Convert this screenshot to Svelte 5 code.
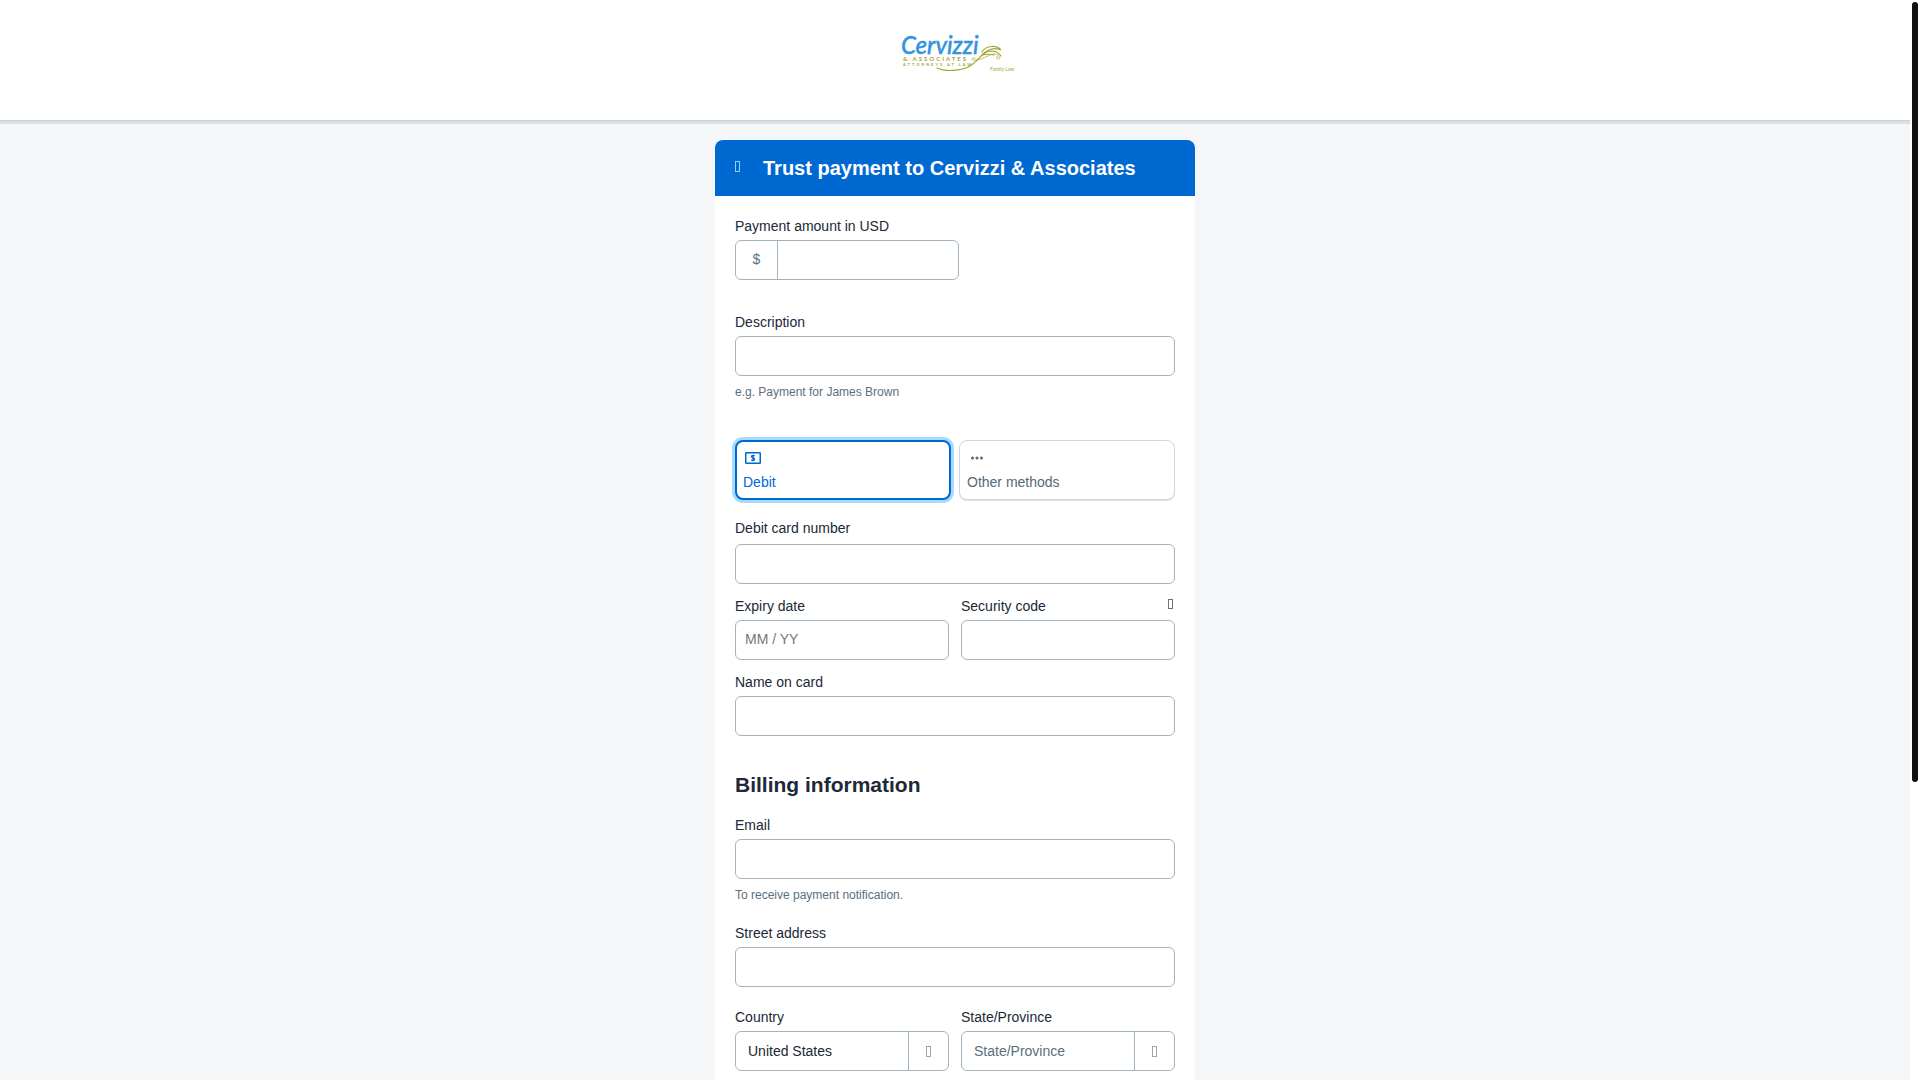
<script>
  let method = $state('debit');
  let amount = $state('');
  let country = $state('US');
  let region = $state('');
</script>

<div class="window">
  <div class="page">
    <header class="brand">
      <svg class="logo" viewBox="0 0 120 40" role="img" aria-label="Cervizzi &amp; Associates, Attorneys at Law, Family Law">
        <text class="wordmark" x="6" y="22">Cervizzi</text>
        <text class="firm" x="8" y="29">&amp; ASSOCIATES</text>
        <text class="trade" x="8" y="34">ATTORNEYS AT LAW</text>
        <text class="area" x="95" y="39">Family Law</text>
        <path class="swash" d="M42 36 C50 40 66 39 75 34 C84 29 86 20 96 19 C101 19 104 21 106 24" />
        <path class="swash" d="M87 20 C91 13 102 13 106 18 C99 15 93 17 87 23 C92 22 96 22 99 23" />
        <path class="swash thin" d="M80 26 C76 25 76 29 80 28 C88 28 92 23 99 22 C104 22 107 27 103 27 C101 27 101 25 103 24" />
      </svg>
    </header>

    <main>
      <form class="card">
        <div class="card-head">
          <span class="box light" aria-hidden="true"></span>
          <h1>Trust payment to Cervizzi &amp; Associates</h1>
        </div>

        <div class="card-body">
          <div class="field">
            <label for="amount">Payment amount in USD</label>
            <div class="money">
              <span class="currency">$</span>
              <input id="amount" type="text" inputmode="decimal" bind:value={amount} />
            </div>
          </div>

          <div class="field description">
            <label for="description">Description</label>
            <input id="description" class="control" type="text" />
            <p class="help">e.g. Payment for James Brown</p>
          </div>

          <div class="methods">
            <button type="button" class="method" class:selected={method === 'debit'} aria-pressed={method === 'debit'} onclick={() => (method = 'debit')}>
              <svg viewBox="0 0 16 16" aria-hidden="true">
                <rect x="0.75" y="2.75" width="14.5" height="10.5" rx="0.5" fill="none" stroke="currentColor" stroke-width="1.5" />
                <path d="M9.7 6.2 C9 5.1 6.5 5.2 6.5 6.7 C6.5 8.2 9.6 7.6 9.6 9.3 C9.6 10.9 7 11 6.3 9.7 M8 4.7 V11.3" fill="none" stroke="currentColor" stroke-width="1.3" />
              </svg>
              <span>Debit</span>
            </button>
            <button type="button" class="method" class:selected={method === 'other'} aria-pressed={method === 'other'} onclick={() => (method = 'other')}>
              <svg viewBox="0 0 16 16" aria-hidden="true">
                <circle cx="3.5" cy="8" r="1.5" fill="currentColor" />
                <circle cx="8" cy="8" r="1.5" fill="currentColor" />
                <circle cx="12.5" cy="8" r="1.5" fill="currentColor" />
              </svg>
              <span>Other methods</span>
            </button>
          </div>

          <div class="field card-number">
            <label for="card-number">Debit card number</label>
            <input id="card-number" class="control" type="text" inputmode="numeric" />
          </div>

          <div class="pair">
            <div class="field">
              <label for="expiry">Expiry date</label>
              <input id="expiry" class="control" type="text" placeholder="MM / YY" />
            </div>
            <div class="field">
              <div class="label-row">
                <label for="cvv">Security code</label>
                <button type="button" class="hint" aria-label="About the security code"><span class="box small"></span></button>
              </div>
              <input id="cvv" class="control" type="text" inputmode="numeric" />
            </div>
          </div>

          <div class="field holder">
            <label for="holder">Name on card</label>
            <input id="holder" class="control" type="text" />
          </div>

          <h2>Billing information</h2>

          <div class="field">
            <label for="email">Email</label>
            <input id="email" class="control" type="email" />
            <p class="help">To receive payment notification.</p>
          </div>

          <div class="field street">
            <label for="street">Street address</label>
            <input id="street" class="control" type="text" />
          </div>

          <div class="pair region">
            <div class="field">
              <label for="country">Country</label>
              <div class="picker">
                <select id="country" bind:value={country}>
                  <option value="US">United States</option>
                </select>
                <span class="arrow" aria-hidden="true"><span class="box muted"></span></span>
              </div>
            </div>
            <div class="field">
              <label for="state">State/Province</label>
              <div class="picker">
                <select id="state" class:empty={region === ''} bind:value={region}>
                  <option value="">State/Province</option>
                </select>
                <span class="arrow" aria-hidden="true"><span class="box muted"></span></span>
              </div>
            </div>
          </div>
        </div>
      </form>
    </main>
  </div>

  <div class="track" aria-hidden="true"><div class="thumb"></div></div>
</div>

<style>
  :global(body) {
    background: #fff;
    color: #202837;
    font: 14px/20px "Liberation Sans", Arial, sans-serif;
  }
  .window, .window :global(*) { box-sizing: border-box; }
  .window {
    display: grid;
    grid-template-columns: minmax(0, 1fr) 10px;
    height: 100vh;
  }
  .page {
    display: flex;
    flex-direction: column;
    overflow-y: auto;
    scrollbar-width: none;
    background: #f4f6f8;
  }
  .track { padding: 2px; background: #fff; }
  .thumb { width: 6px; height: 72.5%; border-radius: 3px; background: #111; }

  .brand {
    flex: none;
    display: flex;
    justify-content: center;
    padding: 32px 0 48px;
    background: #fff;
    border-bottom: 1px solid #c9d2d9;
    box-shadow: 0 3px #dadfe3;
  }
  .logo { width: 120px; height: 40px; overflow: visible; }
  .wordmark { font: italic 500 24px Lato, sans-serif; fill: #3293de; stroke: #3293de; stroke-width: 0.4; }
  .firm { font: bold 6px Lato, sans-serif; letter-spacing: 2px; fill: #a3a62f; }
  .trade { font: bold 4px Lato, sans-serif; letter-spacing: 2px; fill: #a3a62f; }
  .area { font: 5px Lato, sans-serif; fill: #a3a62f; }
  .swash { fill: none; stroke: #a3a62f; stroke-width: 1.2; stroke-linecap: round; }
  .thin { stroke-width: 0.7; }

  main {
    flex: 1 0 auto;
    display: flex;
    justify-content: center;
    padding-top: 19px;
  }
  .card {
    width: 480px;
    max-width: 100%;
    background: #fff;
    border-radius: 8px 8px 0 0;
  }
  .card-head {
    display: flex;
    align-items: flex-start;
    gap: 23px;
    padding: 16px 20px;
    border-radius: 8px 8px 0 0;
    background: #0069d1;
    color: #fff;
  }
  h1, h2, p { margin: 0; }
  h1 { font-size: 20px; line-height: 24px; }
  h2 { margin: 35px 0 16px; font-size: 21px; line-height: 28px; }
  .card-body { padding: 20px 20px 0; }

  .box { display: block; width: 5px; height: 11px; border: 1px solid; }
  .light { margin-top: 5px; color: #8fd0ff; }
  .small { height: 10px; color: #6b7280; }
  .muted { color: #99a6b4; }

  .field { display: flex; flex-direction: column; gap: 4px; min-width: 0; }
  .control, .money, .picker {
    width: 100%;
    height: 40px;
    border: 1px solid #a3b4c1;
    border-radius: 6px;
    background: #fff;
  }
  input, select, button { margin: 0; font: inherit; color: inherit; }
  .control { padding: 0 9px 2px; }
  .control::placeholder { color: #757575; }
  .help { margin-top: 4px; font-size: 12px; line-height: 16px; color: #5a6f80; }

  .money { display: flex; width: 224px; overflow: hidden; }
  .currency {
    flex: none;
    width: 42px;
    line-height: 36px;
    text-align: center;
    color: #5a6f80;
    border-right: 1px solid #a3b4c1;
  }
  .money input { flex: 1; min-width: 0; padding: 0 9px; border: 0; background: none; }

  .description { margin-top: 32px; }
  .methods { display: grid; grid-template-columns: 1fr 1fr; gap: 8px; margin-top: 40px; }
  .method {
    display: flex;
    flex-direction: column;
    align-items: flex-start;
    gap: 6px;
    height: 60px;
    padding: 9px 7px 7px;
    border: 1px solid #cfd8e0;
    border-radius: 8px;
    background: #fff;
    box-shadow: 0 1px #dde2e7;
    color: #546a7a;
    cursor: pointer;
  }
  .method svg { flex: none; width: 16px; height: 16px; margin-left: 2px; }
  .method.selected {
    padding: 8px 6px 6px;
    border: 2px solid #0069d1;
    box-shadow: 0 0 0 3px #a4dbff;
    color: #0069d1;
  }

  .card-number { gap: 6px; margin-top: 18px; }
  .pair { display: grid; grid-template-columns: 1fr 1fr; gap: 12px; margin-top: 12px; }
  .label-row { display: flex; align-items: flex-start; justify-content: space-between; height: 20px; }
  .hint { padding: 3px 2px; border: 0; background: none; line-height: 10px; }
  .holder { margin-top: 12px; }
  .street, .region { margin-top: 20px; }

  .picker { display: grid; grid-template-columns: minmax(0, 1fr) 40px; }
  .picker select {
    grid-area: 1 / 1 / 2 / 3;
    padding: 0 52px 0 12px;
    border: 0;
    border-radius: 6px;
    background: none;
    appearance: none;
  }
  .picker select.empty { color: #5a6f80; }
  .arrow {
    grid-area: 1 / 2;
    display: flex;
    align-items: center;
    justify-content: center;
    border-left: 1px solid #a3b4c1;
    pointer-events: none;
  }
</style>
